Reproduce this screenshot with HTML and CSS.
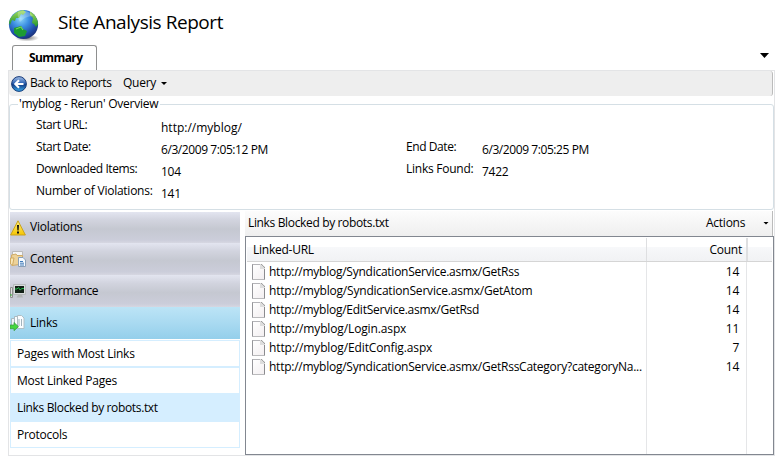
FILE: index.html
```
<!DOCTYPE html>
<html lang="en">
<head>
<meta charset="utf-8">
<title>Site Analysis Report</title>
<link rel="stylesheet" href="styles.css">
</head>
<body>
<header class="title-bar">
  <svg class="globe" viewBox="0 0 32 34" width="32" height="34">
    <defs>
      <radialGradient id="sea" cx=".4" cy=".3" r=".72"><stop offset="0" stop-color="#8cd8f8"/><stop offset=".4" stop-color="#3c8ee2"/><stop offset=".78" stop-color="#1f4ca8"/><stop offset="1" stop-color="#1b3078"/></radialGradient>
      <radialGradient id="shade"><stop offset="0" stop-color="#777"/><stop offset="1" stop-color="#777" stop-opacity="0"/></radialGradient>
      <linearGradient id="land" x2="0" y2="1"><stop offset="0" stop-color="#a4dc60"/><stop offset="1" stop-color="#20942c"/></linearGradient>
      <clipPath id="disc"><circle cx="15.5" cy="15.5" r="14.5"/></clipPath>
    </defs>
    <ellipse cx="19" cy="29" rx="12" ry="3.5" fill="url(#shade)"/>
    <circle cx="15.5" cy="15.5" r="14.6" fill="url(#sea)"/>
    <g clip-path="url(#disc)">
      <path d="M3 8Q8 2 15 1L18 3L15 6L13 5L11 9L8 9L7 12L4 11L2 16L0 12Z" fill="url(#land)"/>
      <path d="M22 2L27 5L31 14L28 18L26 15L24 14L25 9L22 6Z" fill="url(#land)"/>
      <path d="M6 19L13 17L15 20L19 22L17 27L11 28L6 24Z" fill="#1c9b32"/>
      <path d="M8 20L13 18L15 21" fill="none" stroke="#70d35a" stroke-width="1.2"/>
    </g>
    <path d="M10 3Q20 0 25 7Q17 7 12 13Q9 8 10 3Z" fill="#fff" opacity=".23"/>
  </svg>
  <h1><span>Site Analysis Report</span></h1>
</header>
<div class="tab-row"><div class="tab">Summary</div><i class="arrow big"></i></div>
<main class="panel">
  <nav class="toolbar">
    <svg class="back" viewBox="0 0 16 16" width="16" height="16">
      <defs><linearGradient id="ball" x2="0" y2="1"><stop offset="0" stop-color="#a4bee5"/><stop offset=".45" stop-color="#2c63b4"/><stop offset=".55" stop-color="#123f88"/><stop offset="1" stop-color="#3aacee"/></linearGradient></defs>
      <circle cx="8" cy="8" r="7.4" fill="url(#ball)" stroke="#183b78"/>
      <path d="M12.5 8H4.5M8 4.2L4.2 8L8 11.8" fill="none" stroke="#fff" stroke-width="2"/>
    </svg>
    <span class="back-label tight">Back to Reports</span><span class="query">Query</span><i class="arrow"></i>
  </nav>
  <fieldset class="overview">
    <legend><span>'myblog - Rerun' Overview</span></legend>
    <dl class="facts">
      <dt class="tight">Start URL:</dt><dd class="wide">http://myblog/</dd><dt></dt><dd></dd>
      <dt class="tight">Start Date:</dt><dd class="tight">6/3/2009 7:05:12 PM</dd><dt class="tight">End Date:</dt><dd class="tight">6/3/2009 7:05:25 PM</dd>
      <dt class="tight">Downloaded Items:</dt><dd>104</dd><dt>Links Found:</dt><dd>7422</dd>
      <dt>Number of Violations:</dt><dd>141</dd><dt></dt><dd></dd>
    </dl>
  </fieldset>
  <div class="split">
    <aside class="side">
      <div class="cat first">
        <svg viewBox="0 0 16 16" width="16" height="16"><defs><linearGradient id="warn" x2="0" y2="1"><stop offset="0" stop-color="#fff27a"/><stop offset="1" stop-color="#f5c400"/></linearGradient></defs><path d="M8 .8L15.4 15H.6Z" fill="url(#warn)" stroke="#c9a21c" stroke-linejoin="round"/><path d="M7 5H9L8.6 10.4H7.4ZM7 11.6H9V13.6H7Z" fill="#111"/></svg>
        <span>Violations</span></div>
      <div class="cat">
        <svg viewBox="0 0 16 16" width="16" height="16"><path d="M2.5.5H12.5V5H2.5Z" fill="#f4f5f7" stroke="#b9b9b9"/><path d="M1.5 4L6 3L7 4.5H12.5V13L2 14.5Z" fill="#edd299" stroke="#d0ab66"/><path d="M.5 7H4L2.5 14.5L.5 13Z" fill="#f9e7b8" stroke="#d0aa61"/><path d="M8.5 6.5H13L15.5 9V15.5H8.5Z" fill="#f5faff" stroke="#8ba0b8"/><path d="M10 10.5H13M10 12.2H14M10 14H14" stroke="#407bb8"/></svg>
        <span>Content</span></div>
      <div class="cat">
        <svg viewBox="0 0 16 16" width="16" height="16"><path d="M.5 4.5H2.5V14.5H.5Z" fill="#e0e0e0" stroke="#909090"/><path d="M0 12H2" stroke="#31ad35"/><path d="M3.5 1.5H15.5V11.5H3.5Z" fill="#d9dcdd" stroke="#b5b9ba"/><path d="M5 3H14V10H5Z" fill="#122016"/><path d="M5 6H7L8.5 4.5L10 7L12 5.5H14" fill="none" stroke="#21bd49"/><path d="M8 12H12L13 14.5H6.5Z" fill="#b1b4b5"/></svg>
        <span class="tight">Performance</span></div>
      <div class="cat active">
        <svg viewBox="0 0 16 16" width="16" height="16"><path d="M1.5 3.5H7.5V12.5H1.5Z" fill="#f0f5f8" stroke="#a9b9c1"/><path d="M4.5 1.5H10.5V12.5H4.5Z" fill="#fbfdff" stroke="#a9b9c1"/><path d="M7.5.5H11.5L14 3V13.5H7.5Z" fill="#fbfdff" stroke="#b0bec5"/><path d="M9 4V11M11.5 4V11" stroke="#a3b3bd"/><path d="M0 10H4V7.5L8.5 11.7L4 15.7V13.7H0Z" fill="#45d63f" stroke="#35983b" stroke-width=".7"/></svg>
        <span>Links</span></div>
      <ul class="sub">
        <li>Pages with Most Links</li><li>Most Linked Pages</li><li class="selected">Links Blocked by robots.txt</li><li>Protocols</li>
      </ul>
    </aside>
    <section class="results">
      <div class="results-bar"><span class="caption">Links Blocked by robots.txt</span><span class="actions">Actions</span><i class="arrow"></i></div>
      <div class="grid">
        <div class="head"><div class="url">Linked-URL</div><div class="count">Count</div><div class="rest"></div></div>
        <div class="rows">
          <div class="row"><i class="doc"></i><span class="link">http://myblog/SyndicationService.asmx/GetRss</span><span class="n">14</span></div>
          <div class="row"><i class="doc"></i><span class="link loose">http://myblog/SyndicationService.asmx/GetAtom</span><span class="n">14</span></div>
          <div class="row"><i class="doc"></i><span class="link">http://myblog/EditService.asmx/GetRsd</span><span class="n">14</span></div>
          <div class="row"><i class="doc"></i><span class="link wider">http://myblog/Login.aspx</span><span class="n">11</span></div>
          <div class="row"><i class="doc"></i><span class="link wider">http://myblog/EditConfig.aspx</span><span class="n">7</span></div>
          <div class="row"><i class="doc"></i><span class="link">http://myblog/SyndicationService.asmx/GetRssCategory?categoryNa...</span><span class="n">14</span></div>
        </div>
      </div>
    </section>
  </div>
</main>
</body>
</html>
```
FILE: styles.css
```
* { box-sizing: border-box; }
body { margin: 0; width: 783px; height: 464px; overflow: hidden; background: #fff; color: #000; font: 12px/16px "Open Sans", "Noto Sans", sans-serif; letter-spacing: -.25px; white-space: nowrap; }
h1, dl, dd, ul { margin: 0; padding: 0; }
svg { display: block; flex: none; }
.tight { letter-spacing: -.42px; }
.wide { letter-spacing: 0; }
.loose { letter-spacing: -.2px; }
.wider { letter-spacing: -.13px; }
.title-bar { height: 45px; display: flex; padding: 9px 0 0 8px; }
h1 { font-size: 19px; line-height: 26px; font-weight: 400; letter-spacing: -.45px; margin-left: 18px; }
.tab-row { height: 25px; display: flex; justify-content: space-between; padding: 0 14px 0 12px; }
.tab { width: 85px; height: 25px; border: 1px solid #8e8f8f; border-bottom: 0; border-radius: 3px 3px 0 0; font-weight: 700; padding: 4px 0 0 16px; letter-spacing: -.6px; }
.arrow { width: 6px; height: 3px; background: #000; clip-path: polygon(0 0, 100% 0, 50% 100%); flex: none; }
.arrow.big { width: 9px; height: 5px; margin-top: 8px; }
.panel { width: 767px; height: 386px; margin-left: 8px; border: 1px solid #e3e4e6; }
.toolbar { height: 25px; margin-right: 1px; background: #eee; border-right: 1px solid #bbb; border-radius: 0 3px 3px 4px; display: flex; align-items: center; padding-left: 2px; }
.back-label { width: 93px; margin-left: 3px; padding-bottom: 1px; }
.query { width: 38px; padding-bottom: 1px; }
.overview { margin: 0; padding: 0 0 0 26px; min-width: 0; height: 114px; border: 1px solid #d5dfe5; border-radius: 3px; width: 765px; }
.overview legend { margin-left: -18px; padding: 0 2px 0 1px; height: 16px; }
.facts { display: grid; grid-template-columns: 125px 245px 76px 200px; grid-auto-rows: 22px; padding-top: 5px; }
.facts dd { padding-top: 3px; }
.split { height: 245px; display: flex; justify-content: space-between; padding-top: 1px; }
.side { width: 230px; margin: 1px 0 0 1px; }
.cat { height: 32px; display: flex; align-items: center; gap: 4px; background: linear-gradient(#e3e5f0 0, #d2d4df 25%, #c5c8d1 55%, #cbcdda 90%, #d6d7e2 100%); }
.cat.first { height: 31px; }
.cat.active { background: linear-gradient(#bce4f6 0, #a9daf1 50%, #94cfeb 100%); }
.cat span { padding-bottom: 1px; }
.sub { list-style: none; border: 1px solid #d5eeff; margin-top: 1px; height: 108px; }
.sub li { height: 27px; padding: 5px 6px; border-bottom: 2px solid #d5eeff; }
.sub li:last-child { height: 25px; border-bottom-width: 0; }
.sub .selected { background: #d5eeff; letter-spacing: -.35px; }
.results { width: 529px; height: 244px; }
.results-bar { height: 25px; margin-right: 1px; display: flex; align-items: center; padding: 0 3px 1px; background: linear-gradient(#fcfcfc, #efefef); border-right: 1px solid #bbb; }
.caption { letter-spacing: -.35px; }
.actions { margin-left: auto; width: 57px; }
.grid { height: 219px; border: 1px solid #828790; }
.head { height: 24px; display: flex; margin: 1px 1px 0; border-bottom: 1px solid #d5d5d5; background: linear-gradient(#fff 0 38%, #f7f8fa 39%, #f1f2f4); }
.head .url { width: 400px; padding: 4px 0 0 6px; border-right: 1px solid #dedfe1; }
.head .count { width: 101px; padding: 4px 4px 0; text-align: right; border-right: 2px solid #dedfe1; }
.rows { height: 192px; background: linear-gradient(#e5e6e8, #e5e6e8) 400px 0 / 1px 100% no-repeat, linear-gradient(#e5e6e8, #e5e6e8) 500px 0 / 1px 100% no-repeat; }
.row { height: 19px; display: flex; align-items: center; padding-left: 6px; }
.doc { width: 13px; height: 16px; border: 1px solid #a6a6aa; border-color: #b4b4b8 #8b8b8f #77777b #96969a; background: linear-gradient(135deg, #fff, #f3eff1); clip-path: polygon(0 0, 9px 0, 13px 4px, 13px 16px, 0 16px); position: relative; }
.doc::after { content: ""; position: absolute; right: -1px; top: -1px; width: 5px; height: 5px; background: linear-gradient(45deg, #ddd 50%, #999 51%); }
.link { width: 380px; margin-left: 4px; }
.n { width: 90px; text-align: right; }
```
